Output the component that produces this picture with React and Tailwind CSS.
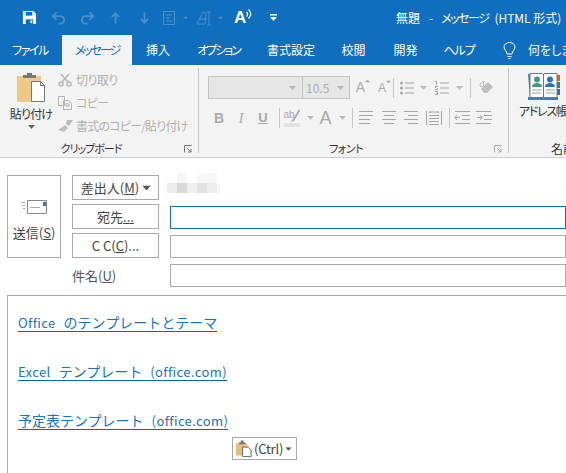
const JP = '"Noto Sans CJK JP", "Noto Sans", sans-serif';
const G = '#a6a6a6';

function Caret({ c = '#a6a6a6', className = '' }) {
  return <svg width="7" height="4" viewBox="0 0 7 4" className={className}><path d="M0 0h7L3.5 4z" fill={c} /></svg>;
}
function Lines({ rows, w = 16 }) {
  return (
    <svg width={w} height="16" viewBox={`0 0 ${w} 16`} fill="none" stroke={G} strokeWidth="1">
      {rows.map(([a, b, y], i) => <path key={i} d={`M${a} ${y}.5H${b}`} />)}
    </svg>
  );
}
function Sep({ h = 'h-[20px]' }) { return <div className={`w-px ${h} bg-[#c6c6c6]`} />; }
function Slot({ w, children }) {
  return <div className="flex h-full shrink-0 items-center justify-center" style={{ width: w }}>{children}</div>;
}

function TitleBar() {
  const d = '#4c8fca';
  return (
    <div className="flex h-[35px] items-center bg-[#106ebe]">
      <div className="flex h-full w-[280px] shrink-0 items-center pl-[22px]">
        <svg width="15" height="15" viewBox="0 0 16 16"><path d="M1 1h11l3 3v11H1z" fill="#fff" /><path d="M4 2h7v4H4z" fill="#106ebe" /><path d="M4 10h8v5H4z" fill="#106ebe" /><path d="M9 11h2v3H9z" fill="#fff" /></svg>
        <svg className="ml-[14px]" width="15" height="14" viewBox="0 0 16 14" fill="none" stroke={d} strokeWidth="2"><path d="M6 1 2 5l4 4M2 5h8a4 4 0 0 1 0 8H8" /></svg>
        <svg className="ml-[14px]" width="15" height="14" viewBox="0 0 16 14" fill="none" stroke={d} strokeWidth="2"><path d="m10 1 4 4-4 4M14 5H6a4 4 0 0 0 0 8h2" /></svg>
        <svg className="ml-[15px]" width="11" height="14" viewBox="0 0 12 14" fill="none" stroke={d} strokeWidth="2"><path d="M6 13V2M2 6l4-4 4 4" /></svg>
        <svg className="ml-[18px]" width="11" height="14" viewBox="0 0 12 14" fill="none" stroke={d} strokeWidth="2"><path d="M6 1v11M2 8l4 4 4-4" /></svg>
        <svg className="ml-[13px]" width="12" height="14" viewBox="0 0 12 14" fill="none" stroke={d}><path d="M.5.5h11v13H.5zM3 4h6M3 7h4M3 10h6" /></svg>
        <Caret c={d} className="ml-[7px] scale-75" />
        <svg className="ml-[7px]" width="16" height="16" viewBox="0 0 16 16" fill="none" stroke={d}><path d="M1 14 7 2l3 1-1 11zM3 9h8" /><path d="M13 2v13M11 2h4M11 15h4" /></svg>
        <Caret c={d} className="ml-[5px] scale-75" />
        <div className="ml-[10px] flex items-start">
          <span className="text-[17px] font-bold leading-none text-white" style={{ fontFamily: '"Liberation Sans", sans-serif' }}>A</span>
          <svg width="6" height="11" viewBox="0 0 6 11" fill="none" stroke="#fff" strokeWidth="1.200"><path d="M.5 3c1.500 1.500 1.500 3 0 4.500M2.500 .5c3 3 3 6 0 9" /></svg>
        </div>
        <svg className="ml-[18px]" width="7" height="7" viewBox="0 0 7 7"><path d="M0 0h7v1.500H0zM0 3h7L3.500 7z" fill="#fff" /></svg>
      </div>
      <div className="ml-[116px] flex whitespace-nowrap pt-[1px] text-[12px] leading-none text-white" style={{ fontFeatureSettings: '"palt"' }}>
        <span>無題</span>
        <span className="ml-[9px]">-</span>
        <span className="ml-[8px] tracking-[-1.500px]">メッセージ</span>
        <span className="ml-[6px]">(HTML 形式)</span>
      </div>
    </div>
  );
}

function Tabs() {
  const T = ({ w, t = 0, children }) => <div className="shrink-0 text-center leading-[30px]" style={{ width: w, letterSpacing: t }}>{children}</div>;
  return (
    <div className="flex h-[30px] items-center overflow-hidden whitespace-nowrap bg-[#106ebe] text-[12px] text-white" style={{ fontFeatureSettings: '"palt"' }}>
      <T w={60} t="-1.500px">ファイル</T>
      <div className="ml-[2px] w-[70px] shrink-0 bg-[#f3f3f3] text-center leading-[30px] tracking-[-2px] text-[#106ebe]">メッセージ</div>
      <T w={52}>挿入</T>
      <T w={69} t="-2px">オプション</T>
      <T w={76}>書式設定</T>
      <T w={49}>校閲</T>
      <T w={55}>開発</T>
      <T w={52} t="-1px">ヘルプ</T>
      <svg className="ml-[18px] shrink-0" width="13" height="17" viewBox="0 0 13 17" fill="none" stroke="#fff"><path d="M4 12c0-3-3-4-3-7a5.500 4.500 0 0 1 11 0c0 3-3 4-3 7zM4.500 14.500h4M5.500 16.500h2" /></svg>
      <div className="ml-[12px] shrink-0">何をしま</div>
    </div>
  );
}

function Clipboard() {
  const gray = 'text-[#b0b0b0]';
  return (
    <div className="flex h-full w-[198px] shrink-0 flex-col" style={{ fontFeatureSettings: '"palt"' }}>
      <div className="flex h-[75px]">
        <div className="ml-[4px] flex w-[54px] shrink-0 flex-col items-center pt-[8px]">
          <svg width="28" height="29" viewBox="0 0 28 29">
            <path d="M0 3h24v26H0z" fill="#f0c987" />
            <path d="M6 4V2h4V0h5v2h4v3H6z" fill="#777" />
            <path d="M14.500 8.500h9l4 4v16h-13z" fill="#fff" stroke="#777" />
            <path d="M23.500 8.500v4h4" fill="none" stroke="#777" />
          </svg>
          <div className="mt-[4px] whitespace-nowrap text-[12px] leading-[16px] tracking-[-0.800px] text-[#333]">貼り付け</div>
          <Caret c="#666" className="mt-[3px]" />
        </div>
        <div className={`flex flex-col pt-[6px] text-[12px] leading-[24px] ${gray}`}>
          <div className="flex h-[18px] items-center">
            <svg width="14" height="14" viewBox="0 0 14 14" fill="none" stroke="#b5b5b5" strokeWidth="1.500"><path d="M3 1l7 8M11 1 4 9" /><circle cx="3" cy="11" r="2" /><circle cx="11" cy="11" r="2" /></svg>
            <span className="ml-[4px] tracking-[-0.600px]">切り取り</span>
          </div>
          <div className="mt-[5px] flex h-[18px] items-center">
            <svg width="14" height="14" viewBox="0 0 14 14" fill="none" stroke="#b5b5b5"><path d="M.5.5h6v9h-6zM5.500 4.500h5l3 3v6h-8zM7 8h5M7 10h5" /></svg>
            <span className="ml-[4px] tracking-[-0.600px]">コピー</span>
          </div>
          <div className="mt-[5px] flex h-[18px] items-center">
            <svg width="16" height="14" viewBox="0 0 16 14"><path d="M9 1l6 0-4 6-3-2zM7 6l3 3-4 4-6-2z" fill="#bdbdbd" /></svg>
            <span className="ml-[2px] whitespace-nowrap tracking-[-0.800px]">書式のコピー/貼り付け</span>
          </div>
        </div>
      </div>
      <div className="relative flex h-[18px] items-center justify-center pr-[16px] pt-[1px] text-[11px] leading-none tracking-[-1px] text-[#333]">
        クリップボード
        <svg className="absolute right-[6px] top-[6px]" width="8" height="8" viewBox="0 0 8 8" fill="none" stroke="#777"><path d="M.5 7.500v-7h7M3 3l4 4M7 4v3H4" /></svg>
      </div>
    </div>
  );
}

function FontGroup() {
  return (
    <div className="flex h-full w-[309px] shrink-0 flex-col pl-[9px]">
      <div className="h-[75px]">
        <div className="mt-[11px] flex h-[23px] items-center">
          <div className="flex h-full w-[95px] shrink-0 items-center justify-end border border-[#c6c6c6] bg-[#e6e6e6] pr-[6px]"><Caret c="#b5b5b5" /></div>
          <div className="flex h-full w-[47px] shrink-0 items-center justify-between border border-l-0 border-[#c6c6c6] bg-[#e6e6e6] pl-[3px] pr-[5px] text-[12px] text-[#adadad]">10.5<Caret c="#b5b5b5" /></div>
          <Slot w={21}><span className="relative text-[14px] text-[#aaa]" style={{ fontFamily: '"Liberation Sans"' }}>A<Caret c="#aaa" className="absolute -right-[6px] top-[2px] scale-75 rotate-180" /></span></Slot>
          <Slot w={22}><span className="relative text-[12px] text-[#aaa]" style={{ fontFamily: '"Liberation Sans"' }}>A<Caret c="#aaa" className="absolute -right-[6px] top-[1px] scale-75" /></span></Slot>
          <Sep />
          <Slot w={25}>
            <svg width="14" height="14" viewBox="0 0 14 14" fill={G}><circle cx="1.500" cy="2" r="1.500" /><circle cx="1.500" cy="7" r="1.500" /><circle cx="1.500" cy="12" r="1.500" /><path d="M5 1.500h9v1H5zM5 6.500h9v1H5zM5 11.500h9v1H5z" /></svg>
          </Slot>
          <Caret c="#bbb" className="ml-[1px]" />
          <Slot w={29}>
            <svg width="14" height="14" viewBox="0 0 14 14" fill={G}><path d="M0 0h2v4H1V1H0zM0 5h3v1H1v1h2v2H0V8h2V7H0zM0 10h3v4H0v-1h2v-.5H1v-1h1V11H0zM5 1.500h9v1H5zM5 6.500h9v1H5zM5 11.500h9v1H5z" /></svg>
          </Slot>
          <Caret c="#bbb" className="" />
          <div className="ml-[7px]"><Sep /></div>
          <Slot w={31}>
            <svg width="16" height="16" viewBox="0 0 16 16"><path d="M2 9 9 2l5 5-6 6H5z" fill="#bdbdbd" /><path d="M1 6c0-3 2-4 3-5l1 4-2 2z" fill="none" stroke="#bbb" /></svg>
          </Slot>
        </div>
        <div className="mt-[7px] flex h-[24px] items-center">
          <Slot w={22}><b className="text-[14px] text-[#a8a8a8]" style={{ fontFamily: '"Liberation Sans"' }}>B</b></Slot>
          <Slot w={22}><i className="text-[14px] text-[#a8a8a8]" style={{ fontFamily: '"Liberation Serif"' }}>I</i></Slot>
          <Slot w={22}><u className="text-[13px] font-bold text-[#a8a8a8]" style={{ fontFamily: '"Liberation Sans"' }}>U</u></Slot>
          <div className="ml-[5px]"><Sep /></div>
          <Slot w={23}>
            <div className="relative flex flex-col items-center">
              <span className="h-[13px] w-[16px] text-[10px] leading-[11px] text-[#aaa]" style={{ fontFamily: '"Liberation Sans"' }}>ab</span>
              <svg className="absolute right-0 top-0" width="9" height="13" viewBox="0 0 9 13"><path d="M8 0 2 10l-2 3 3-1L9 2z" fill="#aaa" /></svg>
              <span className="mt-[1px] h-[4px] w-[16px] bg-[#e6dfe6]" />
            </div>
          </Slot>
          <Caret c="#bbb" className="ml-[4px]" />
          <Slot w={23}><span className="text-[18px] leading-none text-[#a8a8a8]" style={{ fontFamily: '"Liberation Sans"' }}>A</span></Slot>
          <Caret c="#bbb" className="ml-[2px]" />
          <div className="ml-[6px]"><Sep /></div>
          <Slot w={26}><Lines rows={[[1, 15, 1], [1, 15, 5], [1, 12, 9], [1, 12, 13]]} /></Slot>
          <Slot w={20}><Lines rows={[[1, 15, 1], [3, 13, 5], [1, 15, 9], [3, 13, 13]]} /></Slot>
          <Slot w={24}><Lines rows={[[1, 15, 1], [5, 15, 5], [1, 15, 9], [5, 15, 13]]} /></Slot>
          <Slot w={22}>
            <svg width="16" height="16" viewBox="0 0 16 16" fill="none" stroke={G}><path d="M.5 1v14M15.500 1v14M3 5.500h10M3 8.500h10M3 11.500h10M3 14.500h10M3 2h10M5 2 3 2.500M11 2l2 .5" /></svg>
          </Slot>
          <div className="ml-[4px]"><Sep /></div>
          <Slot w={24}>
            <svg width="16" height="14" viewBox="0 0 16 14" fill="none" stroke={G}><path d="M1 .5h15M8 4.500h8M8 8.500h8M1 12.500h15M6 6.500H1M3 4 1 6.500 3 9" /></svg>
          </Slot>
          <Slot w={20}>
            <svg width="16" height="14" viewBox="0 0 16 14" fill="none" stroke={G}><path d="M0 .5h15M8 4.500h8M8 8.500h8M0 12.500h15M1 6.500h5M4 4l2 2.500L4 9" /></svg>
          </Slot>
        </div>
      </div>
      <div className="relative flex h-[18px] items-center justify-center pr-[24px] pt-[1px] text-[11px] leading-none tracking-[-0.500px] text-[#333]" style={{ fontFeatureSettings: '"palt"' }}>
        フォント
        <svg className="absolute right-[6px] top-[6px]" width="8" height="8" viewBox="0 0 8 8" fill="none" stroke="#aaa"><path d="M.5 7.500v-7h7M3 3l4 4M7 4v3H4" /></svg>
      </div>
    </div>
  );
}

function Names() {
  return (
    <div className="flex h-full flex-1 flex-col overflow-hidden whitespace-nowrap text-[#333]" style={{ fontFeatureSettings: '"palt"' }}>
      <div className="h-[75px] pl-[10px] pt-[8px]">
        <svg className="ml-[9px]" width="32" height="27" viewBox="0 0 32 27">
          <path d="M0 1h2v25h26v-1H2z" fill="#3d7ebf" />
          <path d="M0 24h30v3H0z" fill="#3d7ebf" />
          <path d="M29 2h3v6h-3z" fill="#d8622e" /><path d="M29 9h3v6h-3z" fill="#2d8a78" /><path d="M29 16h3v6h-3z" fill="#2d6db5" />
          <path d="M2 .5h12l1 1 1-1h13v24H2z" fill="#fff" stroke="#777" />
          <path d="M15.500 1v24" stroke="#777" />
          <circle cx="9" cy="6.500" r="3" fill="#3f9a80" /><path d="M4 14c0-3 3-4 5-4s5 1 5 4z" fill="#3f9a80" />
          <circle cx="22" cy="6.500" r="3" fill="#2e75b6" /><path d="M17 14c0-3 3-4 5-4s5 1 5 4z" fill="#2e75b6" />
          <path d="M4 17h9M4 20h9M18 17h9M18 20h9" stroke="#999" />
        </svg>
        <div className="mt-[3px] text-[12px] leading-[16px] tracking-[-1.300px]">アドレス帳</div>
      </div>
      <div className="flex h-[18px] items-center pl-[42px] pt-[1px] text-[12px] leading-none">名前</div>
    </div>
  );
}

function Btn({ className = '', children }) {
  return <div className={`flex h-[25px] w-[87px] shrink-0 items-center justify-center border border-[#ababab] text-[13px] leading-none text-[#444] ${className}`}>{children}</div>;
}
function Field({ blue }) {
  return <div className={`h-[23px] flex-1 border ${blue ? 'border-[#106ebe]' : 'border-[#ababab]'}`} />;
}

function Blurred() {
  const rows = [
    ['#ffffff', '#f6f6f6', '#ffffff', '#f8f8f8', '#f7f7f7', '#ffffff'],
    ['#ebebeb', '#d9d9d9', '#efefef', '#e2e2e2', '#eeeeee', '#f8f8f8'],
  ];
  const widths = ['w-[10px]', 'w-[10px]', 'w-[10px]', 'w-[10px]', 'w-[10px]', 'w-[3px]'];
  return (
    <div className="-mt-[2px] flex flex-col self-start">
      {rows.map((r, i) => (
        <div key={i} className="flex">
          {r.map((c, j) => <div key={j} className={`h-[10px] ${widths[j]}`} style={{ background: c }} />)}
        </div>
      ))}
    </div>
  );
}

function Compose() {
  return (
    <div className="flex h-[137px] pl-[7px] pt-[17px]">
      <div className="flex h-[83px] w-[54px] shrink-0 flex-col items-center border border-[#ababab] pt-[24px]">
        <svg className="-ml-[1px]" width="27" height="14" viewBox="0 0 27 14" fill="none">
          <path d="M7.500.5h19v13h-19z" stroke="#888" /><path d="M10 7.500h10" stroke="#aaa" /><path d="M23 2h3v4h-3z" fill="#2e75b6" />
          <path d="M1 2.500h4M2 5.500h3M3 8.500h2" stroke="#aaa" />
        </svg>
        <div className="mt-[11px] text-[13px] leading-[16px] text-[#444]">送信(<span className="underline">S</span>)</div>
      </div>
      <div className="ml-[11px] flex flex-1 flex-col">
        <div className="flex h-[29px] items-start">
          <Btn>差出人(<span className="underline">M</span>)<Caret c="#555" className="ml-[4px] scale-125" /></Btn>
          <div className="ml-[8px]"><Blurred /></div>
        </div>
        <div className="flex h-[29px] items-start gap-[11px]">
          <Btn>宛先<span className="underline">...</span></Btn>
          <div className="mt-[2px] flex flex-1"><Field blue /></div>
        </div>
        <div className="flex h-[29px] items-start gap-[11px]">
          <Btn>C C(<span className="underline">C</span>)...</Btn>
          <div className="mt-[2px] flex flex-1"><Field /></div>
        </div>
        <div className="flex h-[29px] items-start gap-[11px]">
          <div className="flex h-[25px] w-[87px] shrink-0 items-center pt-[2px] text-[13px] leading-none text-[#555]">件名(<span className="underline">U</span>)</div>
          <div className="mt-[2px] flex flex-1"><Field /></div>
        </div>
      </div>
    </div>
  );
}

function LinkRow({ children }) {
  return <div className="h-[49px] text-[14px] leading-[17px] text-[#1a73c5]"><span className="inline-block whitespace-nowrap border-b border-[#0563c1]">{children}</span></div>;
}
function Lat({ className = '', children }) {
  return <span className={`text-[13px] tracking-[0.400px] ${className}`}>{children}</span>;
}

function Body() {
  return (
    <div className="ml-[7px] h-[178px] border-l border-t border-[#ababab] pl-[10px] pt-[18px]">
      <LinkRow><Lat className="mr-[8px]">Office</Lat>のテンプレートとテーマ</LinkRow>
      <LinkRow><Lat className="mr-[8px]">Excel</Lat>テンプレート<Lat className="ml-[8px]">(office.com)</Lat></LinkRow>
      <LinkRow>予定表テンプレート<Lat className="ml-[8px]">(office.com)</Lat></LinkRow>
    </div>
  );
}

export default function App() {
  return (
    <div className="relative h-[473px] w-[566px] overflow-hidden bg-white" style={{ fontFamily: JP }}>
      <TitleBar />
      <Tabs />
      <div className="flex h-[93px] border-b border-[#d0d0d0] bg-[#f3f3f3]">
        <Clipboard />
        <div className="mt-[3px] h-[85px] w-px shrink-0 bg-[#c6c6c6]" />
        <FontGroup />
        <div className="mt-[3px] h-[85px] w-px shrink-0 bg-[#c6c6c6]" />
        <Names />
      </div>
      <Compose />
      <Body />
      <div className="absolute left-[232px] top-[437px] flex h-[23px] w-[65px] items-center border border-[#ababab] bg-white pl-[3px] text-[13px] leading-none text-[#444]">
        <svg width="17" height="18" viewBox="0 0 18 18">
          <path d="M0 3h12v13H0z" fill="#e9bd7c" />
          <path d="M3 3V2h2V0h3v2h2v2H3z" fill="#777" />
          <path d="M7 7h6l3 3v7H7z" fill="#fff" stroke="#666" />
        </svg>
        <span className="ml-[1px] tracking-[-0.200px]">(Ctrl)</span>
        <Caret c="#555" className="ml-[2px] scale-90" />
      </div>
    </div>
  );
}
